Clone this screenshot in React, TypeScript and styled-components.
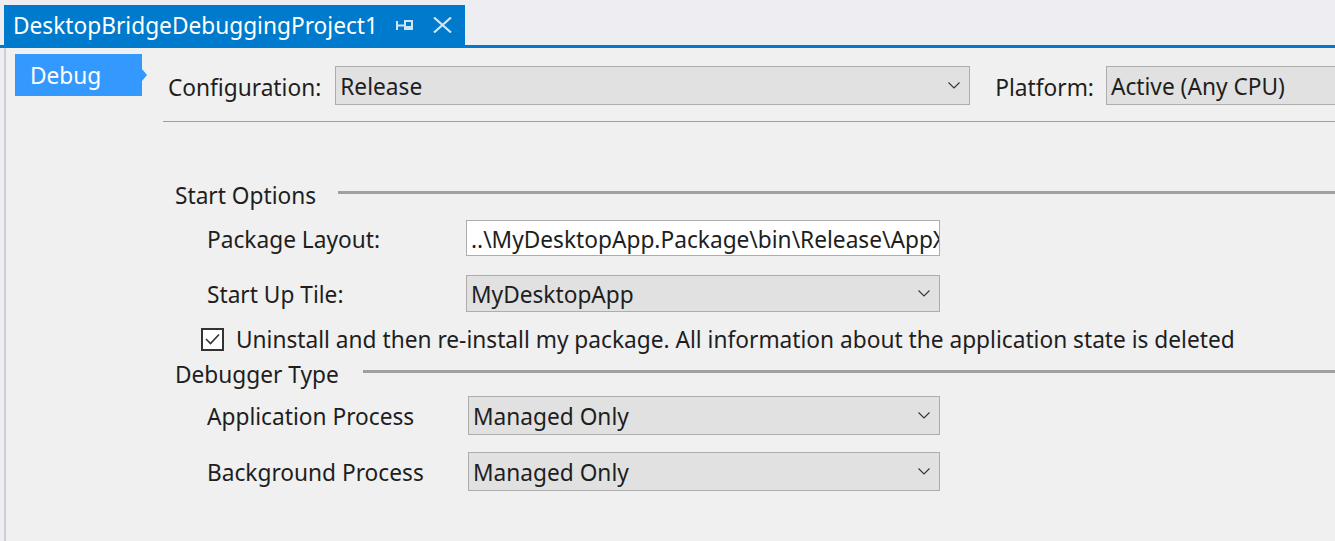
import React from "react";
import styled, { createGlobalStyle } from "styled-components";

const GlobalStyle = createGlobalStyle`
  html, body {
    margin: 0;
    padding: 0;
    background: #eeeef2;
    overflow: hidden;
  }
  * {
    box-sizing: border-box;
  }
`;

const UI_FONT = `"Noto Sans", "Open Sans", sans-serif`;
const FONT_SIZE = "22.7px";

const Page = styled.div`
  width: 1335px;
  height: 541px;
  display: flex;
  flex-direction: column;
  background: #eeeef2;
  font-family: ${UI_FONT};
  font-size: ${FONT_SIZE};
  color: #1e1e1e;
`;

const TabStrip = styled.div`
  display: flex;
  padding: 5px 0 0 4px;
  border-bottom: 3px solid #007acc;
`;

const Tab = styled.div`
  width: 461px;
  height: 43px;
  margin-bottom: -3px;
  padding: 0 0 3px 9px;
  background: #007acc;
  display: flex;
  align-items: center;
  color: #ffffff;
`;

const TabTitle = styled.span`
  flex: 1;
  white-space: nowrap;
`;

const TabButton = styled.span<{ right: number }>`
  height: 24px;
  display: flex;
  align-items: center;
  justify-content: center;
  margin-right: ${(p) => p.right}px;
`;

const Body = styled.div`
  flex: 1;
  display: flex;
  margin-left: 4px;
  border-left: 2px solid #cccedb;
  background: #f0f0f0;
`;

const SideNav = styled.div`
  width: 157px;
  padding: 6px 0 0 9px;
`;

const NavItem = styled.div`
  position: relative;
  width: 127px;
  height: 42px;
  background: #3399ff;
  color: #ffffff;
  display: flex;
  align-items: center;
  padding-left: 15px;

  &::after {
    content: "";
    position: absolute;
    right: -5px;
    top: 15px;
    border-top: 6px solid transparent;
    border-bottom: 6px solid transparent;
    border-left: 5px solid #3399ff;
  }
`;

const Main = styled.div`
  flex: 1;
  display: flex;
  flex-direction: column;
  min-width: 0;
`;

const ConfigBar = styled.div`
  display: flex;
  align-items: center;
  padding: 18px 0 16px 5px;
  border-bottom: 1px solid #a0a0a0;
  white-space: nowrap;
`;

const BarLabel = styled.span<{ left?: number; gap: number }>`
  margin-left: ${(p) => p.left ?? 0}px;
  margin-right: ${(p) => p.gap}px;
  padding-top: 4px;
`;

const Select = styled.div<{ width: number; height?: number }>`
  flex-shrink: 0;
  width: ${(p) => p.width}px;
  height: ${(p) => p.height ?? 39}px;
  background: #e1e1e1;
  border: 1px solid #adadad;
  display: flex;
  align-items: center;
  padding: 2px 0 0 4px;
  overflow: hidden;
`;

const SelectText = styled.span`
  flex: 1;
  white-space: nowrap;
`;

const Chevron = styled.span`
  width: 30px;
  display: flex;
  justify-content: center;
  margin-top: -2px;
`;

const TextBox = styled.div<{ width: number }>`
  width: ${(p) => p.width}px;
  height: 36px;
  background: #ffffff;
  border: 1px solid #adadad;
  display: flex;
  align-items: center;
  padding: 2px 0 0 4px;
  white-space: nowrap;
  overflow: hidden;
`;

const Content = styled.div`
  display: flex;
  flex-direction: column;
  padding: 58px 0 0 12px;
`;

const SectionHeader = styled.div<{ top: number; lineGap: number }>`
  display: flex;
  align-items: center;
  height: 30px;
  margin-top: ${(p) => p.top}px;
  white-space: nowrap;

  &::after {
    content: "";
    flex: 1;
    height: 3px;
    background: #a0a0a0;
    margin-left: ${(p) => p.lineGap}px;
    margin-top: -5px;
  }
`;

const FieldRow = styled.div<{ top: number; height: number }>`
  display: flex;
  align-items: center;
  margin-top: ${(p) => p.top}px;
  height: ${(p) => p.height}px;
  padding-left: 32px;
`;

const FieldLabel = styled.span<{ width: number }>`
  width: ${(p) => p.width}px;
  white-space: nowrap;
  padding-top: 2px;
`;

const CheckRow = styled.label`
  display: flex;
  align-items: center;
  height: 30px;
  margin-top: 12px;
  padding-left: 26px;
  white-space: nowrap;
`;

const CheckBox = styled.span`
  width: 23px;
  height: 23px;
  border: 2px solid #333333;
  background: #ffffff;
  display: flex;
  align-items: center;
  justify-content: center;
  margin-right: 12px;
`;

const ChevronIcon = () => (
  <svg width="12" height="7" viewBox="0 0 12 7">
    <path d="M0.5 0.5 L6 6 L11.5 0.5" fill="none" stroke="#333" strokeWidth="1.1" />
  </svg>
);

const Dropdown = ({ width, text, height }: { width: number; text: string; height?: number }) => (
  <Select width={width} height={height}>
    <SelectText>{text}</SelectText>
    <Chevron>
      <ChevronIcon />
    </Chevron>
  </Select>
);

export default function App() {
  return (
    <Page>
      <GlobalStyle />
      <TabStrip>
        <Tab>
          <TabTitle>DesktopBridgeDebuggingProject1</TabTitle>
          <TabButton right={20}>
            <svg width="17" height="11" viewBox="0 0 17 11">
              <rect x="0" y="1" width="2" height="9" fill="#d0e6f5" />
              <rect x="2" y="4.5" width="6" height="2" fill="#d0e6f5" />
              <rect x="8" y="0" width="9" height="10" fill="#d0e6f5" />
              <rect x="10" y="2" width="5" height="4" fill="#007acc" />
            </svg>
          </TabButton>
          <TabButton right={13}>
            <svg width="19" height="16" viewBox="0 0 19 16">
              <path d="M1 0.5 L18 15.5 M18 0.5 L1 15.5" stroke="#d0e6f5" strokeWidth="2.2" />
            </svg>
          </TabButton>
        </Tab>
      </TabStrip>
      <Body>
        <SideNav>
          <NavItem>Debug</NavItem>
        </SideNav>
        <Main>
          <ConfigBar>
            <BarLabel gap={14}>Configuration:</BarLabel>
            <Dropdown width={635} text="Release" />
            <BarLabel left={25} gap={12}>
              Platform:
            </BarLabel>
            <Dropdown width={260} text="Active (Any CPU)" />
          </ConfigBar>
          <Content>
            <SectionHeader top={0} lineGap={22}>
              Start Options
            </SectionHeader>
            <FieldRow top={10} height={36}>
              <FieldLabel width={259}>Package Layout:</FieldLabel>
              <TextBox width={474}>..\MyDesktopApp.Package\bin\Release\AppX</TextBox>
            </FieldRow>
            <FieldRow top={19} height={37}>
              <FieldLabel width={259}>Start Up Tile:</FieldLabel>
              <Dropdown width={474} height={37} text="MyDesktopApp" />
            </FieldRow>
            <CheckRow>
              <CheckBox>
                <svg width="15" height="12" viewBox="0 0 15 12">
                  <path d="M1 6 L5.5 10.5 L14 1.5" fill="none" stroke="#333" strokeWidth="1.6" />
                </svg>
              </CheckBox>
              Uninstall and then re-install my package. All information about the application state is deleted
            </CheckRow>
            <SectionHeader top={5} lineGap={24}>
              Debugger Type
            </SectionHeader>
            <FieldRow top={7} height={39}>
              <FieldLabel width={261}>Application Process</FieldLabel>
              <Dropdown width={472} text="Managed Only" />
            </FieldRow>
            <FieldRow top={17} height={39}>
              <FieldLabel width={261}>Background Process</FieldLabel>
              <Dropdown width={472} text="Managed Only" />
            </FieldRow>
          </Content>
        </Main>
      </Body>
    </Page>
  );
}
